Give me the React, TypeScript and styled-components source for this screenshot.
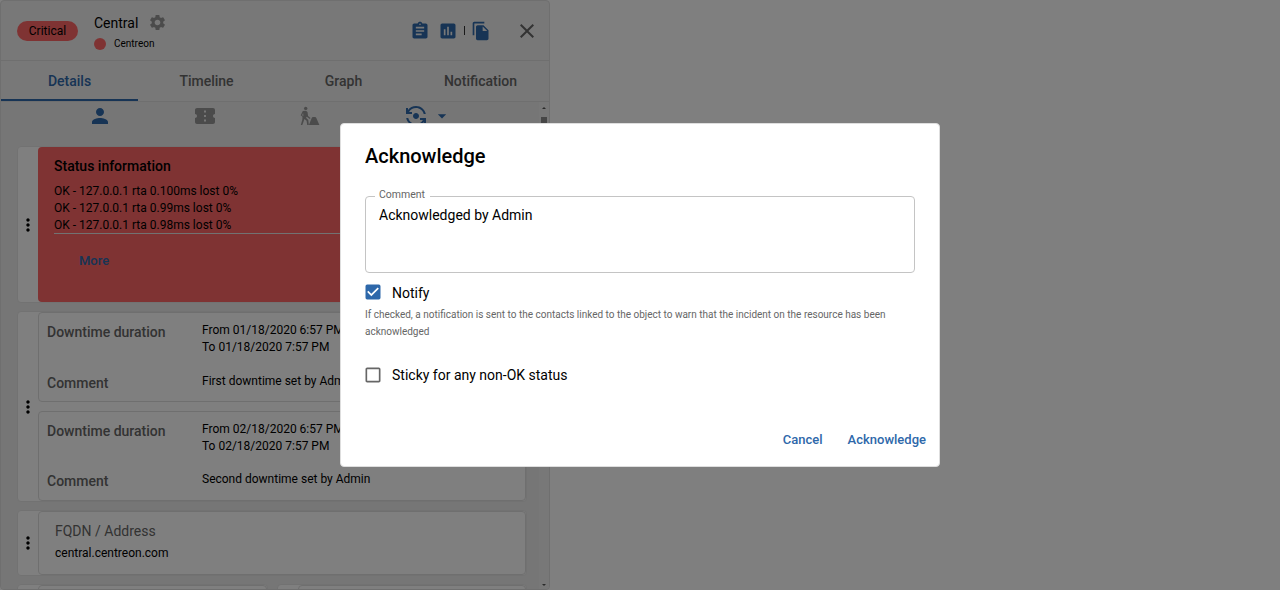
import React from 'react';
import styled, { createGlobalStyle } from 'styled-components';
import {
  MdSettings, MdAssignment, MdInsertChart, MdFileCopy, MdClose, MdPerson,
  MdConfirmationNumber, MdFlipCameraAndroid, MdArrowDropDown, MdMoreVert,
  MdCheckBox, MdCheckBoxOutlineBlank,
} from 'react-icons/md';

const GlobalStyle = createGlobalStyle`
  *, *::before, *::after { box-sizing: border-box; }
  body { margin: 0; background: #fff; overflow: hidden; font-family: Roboto, sans-serif; color: #000; }
  button, textarea { font-family: inherit; }
`;

const blue = '#2e68aa';
const red = '#ff6666';
const grey = '#666';

const Page = styled.main`
  height: 590px;
  overflow: hidden;
`;

const Panel = styled.aside`
  width: 550px;
  height: 590px;
  display: flex;
  flex-direction: column;
  border: 1px solid #dedede;
  border-radius: 4px;
  background: #f0f0f0;
  overflow: hidden;
`;

const PanelHeader = styled.header`
  flex: none;
  height: 60px;
  display: flex;
  align-items: center;
  padding: 0 10px 0 16px;
  border-bottom: 1px solid #dedede;
`;

const StatusChip = styled.span`
  width: 61px;
  height: 20px;
  border-radius: 10px;
  background: ${red};
  font-size: 12px;
  line-height: 21px;
  text-align: center;
`;

const Resource = styled.div`
  flex: 1;
  padding: 5px 0 0 16px;
`;

const ResourceName = styled.div`
  height: 21px;
  display: flex;
  align-items: center;
  gap: 10px;
  font-size: 14px;
  svg { width: 19px; height: 19px; color: #979797; margin-top: -2px; }
`;

const Parent = styled.div`
  height: 20px;
  display: flex;
  align-items: center;
  gap: 8px;
  font-size: 10px;
`;

const Dot = styled.i`
  width: 12px;
  height: 12px;
  border-radius: 50%;
  background: ${red};
`;

const HeaderActions = styled.div`
  display: flex;
  align-items: center;
  color: ${blue};
  svg { width: 20px; height: 20px; }
`;

const ActionIcon = styled.span<{ $gap?: number }>`
  display: flex;
  margin-right: ${p => p.$gap ?? 8}px;
`;

const Divider = styled.i`
  width: 1px;
  height: 9px;
  background: #333;
  margin-right: 6px;
`;

const CloseIcon = styled.span`
  display: flex;
  color: #666;
  svg { width: 24px; height: 24px; }
`;

const Tabs = styled.nav`
  flex: none;
  height: 41px;
  display: grid;
  grid-template-columns: repeat(4, 137px);
  border-bottom: 1px solid #dedede;
`;

const Tab = styled.div<{ $active?: boolean }>`
  font-size: 14px;
  font-weight: 500;
  line-height: 40px;
  text-align: center;
  color: ${p => (p.$active ? blue : grey)};
  box-shadow: ${p => (p.$active ? `inset 0 -2px ${blue}` : 'none')};
`;

const Body = styled.div`
  flex: 1;
  min-height: 0;
  display: flex;
  background: #ececec;
`;

const Content = styled.div`
  width: 538px;
  padding: 0 12px 0 16px;
  overflow: hidden;
`;

const Scrollbar = styled.div`
  width: 10px;
  display: flex;
  flex-direction: column;
  align-items: center;
  justify-content: space-between;
  background: #f0f0f0;
  padding: 5px 0 3px;
`;

const ScrollStart = styled.div`
  display: flex;
  flex-direction: column;
  align-items: center;
  gap: 8px;
`;

const Arrow = styled.i<{ $down?: boolean }>`
  border: 2px solid transparent;
  border-top-width: ${p => (p.$down ? 2 : 0)}px;
  border-bottom-width: ${p => (p.$down ? 0 : 2)}px;
  border-${p => (p.$down ? 'top' : 'bottom')}-color: #555;
`;

const Thumb = styled.i`
  width: 6px;
  height: 100px;
  background: #8c8c8c;
`;

const Toolbar = styled.div`
  height: 44px;
  display: grid;
  grid-template-columns: 30px 75px 30px 75px 30px 76px 30px 22px;
  padding: 2px 0 0 68px;
`;

const ToolIcon = styled.span<{ $active?: boolean; $size?: number }>`
  display: flex;
  justify-content: center;
  height: 24px;
  align-items: center;
  color: ${p => (p.$active ? blue : '#979797')};
  svg { width: ${p => p.$size ?? 24}px; height: ${p => p.$size ?? 24}px; flex: none; }
`;

const Card = styled.section<{ $height: number }>`
  height: ${p => p.$height}px;
  display: flex;
  border: 1px solid #e4e4e4;
  border-radius: 4px;
  background: #fff;
  margin-bottom: 8px;
`;

const Handle = styled.div`
  width: 20px;
  flex: none;
  display: flex;
  align-items: center;
  justify-content: center;
  svg { width: 20px; height: 20px; }
`;

const StatusBox = styled.div`
  flex: 1;
  border-radius: 4px;
  background: ${red};
  padding: 8px 16px;
`;

const StatusTitle = styled.h3`
  margin: 0 0 6px;
  font-size: 14px;
  font-weight: 500;
  line-height: 22px;
`;

const Lines = styled.div`
  height: 51px;
  border-bottom: 1px solid #e4e4e4;
  font-size: 12px;
  line-height: 17px;
`;

const More = styled.div`
  padding: 18px 0 0 25px;
  color: ${blue};
  font-size: 13px;
  font-weight: 500;
  line-height: 18px;
`;

const Stack = styled.div`
  flex: 1;
  display: flex;
  flex-direction: column;
  gap: 8.6px;
`;

const Downtime = styled.div`
  flex: 1;
  display: grid;
  grid-template-columns: 155px 1fr;
  grid-template-rows: 50.6px 1fr;
  padding: 9px 8px 0;
  border: 1px solid #dedede;
  border-radius: 4px;
`;

const Label = styled.div`
  font-size: 14px;
  font-weight: 500;
  line-height: 21px;
  color: ${grey};
`;

const Value = styled.div`
  font-size: 12px;
  line-height: 17px;
`;

const Fact = styled.div`
  flex: 1;
  border: 1px solid #dedede;
  border-radius: 4px;
  padding: 9px 16px;
`;

const FactTitle = styled.div`
  font-size: 14px;
  line-height: 21px;
  color: ${grey};
  margin-bottom: 3px;
`;

const HalfRow = styled.div`
  display: grid;
  grid-template-columns: 251px 250px;
  gap: 9px;
`;

const Backdrop = styled.div`
  position: fixed;
  inset: 0;
  display: flex;
  align-items: center;
  justify-content: center;
  background: rgba(0, 0, 0, 0.5);
`;

const Dialog = styled.div`
  width: 600px;
  height: 344px;
  padding: 16px 25px 0;
  display: flex;
  flex-direction: column;
  border: 1px solid #dedede;
  border-radius: 4px;
  background: #fff;
`;

const DialogTitle = styled.h2`
  margin: 0 -1px 16px;
  font-size: 20px;
  font-weight: 500;
  line-height: 32px;
`;

const Field = styled.fieldset`
  height: 85px;
  margin: 0 -1px 9px;
  padding: 0 8px 0 9px;
  border: 1px solid #c4c4c4;
  border-radius: 4px;
  min-width: 0;
`;

const Legend = styled.legend`
  height: 16px;
  padding: 0 5px 0 4px;
  font-size: 10.5px;
  line-height: 14px;
  color: ${grey};
`;

const Comment = styled.textarea`
  display: block;
  width: 100%;
  height: 56px;
  padding: 2px 4px;
  border: 0;
  outline: 0;
  resize: none;
  background: transparent;
  color: #000;
  font-size: 14px;
  line-height: 18px;
`;

const CheckRow = styled.div<{ $checked?: boolean }>`
  height: 22px;
  display: flex;
  align-items: center;
  gap: 9px;
  margin-left: -3px;
  font-size: 14px;
  svg {
    width: 20px;
    height: 20px;
    margin-bottom: ${p => (p.$checked ? 2 : 0)}px;
    color: ${p => (p.$checked ? blue : grey)};
  }
`;

const Hint = styled.p`
  margin: 2px -1px 24px;
  font-size: 10px;
  line-height: 17px;
  color: ${grey};
`;

const DialogActions = styled.div`
  display: flex;
  justify-content: flex-end;
  gap: 25px;
  margin: auto -12px 15px 0;
`;

const TextButton = styled.button`
  border: 0;
  padding: 0;
  background: none;
  color: ${blue};
  font-size: 13px;
  font-weight: 500;
  line-height: 22px;
`;

const DiggingIcon = () => (
  <svg viewBox="0 0 20 20" fill="currentColor">
    <circle cx="5.7" cy="2.4" r="1.7" />
    <path d="M2.8 4.9 6 4.7l1.5 1.2.6 4.1 2.4 2-.6.9-3.1-2.1-.8 1 2.3 2.2.5 5H7.2l-.6-4.2-2.2-1.9-.8 2.6-1.3 3.5H.8l1.5-5.3.2-2.9L.7 9.3Zm.3 2.1-1 2.2 1.3.9Z" />
    <path d="M8.9 19 11.7 11.9q.4-.9 1.3-.9h2q.9 0 1.3.9L19.4 19Z" />
  </svg>
);

const downtimes = [
  { from: 'From 01/18/2020 6:57 PM', to: 'To 01/18/2020 7:57 PM', comment: 'First downtime set by Admin' },
  { from: 'From 02/18/2020 6:57 PM', to: 'To 02/18/2020 7:57 PM', comment: 'Second downtime set by Admin' },
];

export default function App() {
  return (
    <>
      <GlobalStyle />
      <Page>
        <Panel>
          <PanelHeader>
            <StatusChip>Critical</StatusChip>
            <Resource>
              <ResourceName>Central <MdSettings /></ResourceName>
              <Parent><Dot />Centreon</Parent>
            </Resource>
            <HeaderActions>
              <ActionIcon><MdAssignment /></ActionIcon>
              <ActionIcon $gap={6}><MdInsertChart /></ActionIcon>
              <Divider />
              <ActionIcon $gap={24}><MdFileCopy /></ActionIcon>
            </HeaderActions>
            <CloseIcon><MdClose /></CloseIcon>
          </PanelHeader>
          <Tabs>
            <Tab $active>Details</Tab>
            <Tab>Timeline</Tab>
            <Tab>Graph</Tab>
            <Tab>Notification</Tab>
          </Tabs>
          <Body>
            <Content>
              <Toolbar>
                <ToolIcon $active><MdPerson /></ToolIcon><span />
                <ToolIcon><MdConfirmationNumber /></ToolIcon><span />
                <ToolIcon $size={20}><DiggingIcon /></ToolIcon><span />
                <ToolIcon $active><MdFlipCameraAndroid /></ToolIcon>
                <ToolIcon $active $size={20}><MdArrowDropDown /></ToolIcon>
              </Toolbar>
              <Card $height={157}>
                <Handle><MdMoreVert /></Handle>
                <StatusBox>
                  <StatusTitle>Status information</StatusTitle>
                  <Lines>
                    <div>OK - 127.0.0.1 rta 0.100ms lost 0%</div>
                    <div>OK - 127.0.0.1 rta 0.99ms lost 0%</div>
                    <div>OK - 127.0.0.1 rta 0.98ms lost 0%</div>
                  </Lines>
                  <More>More</More>
                </StatusBox>
              </Card>
              <Card $height={191}>
                <Handle><MdMoreVert /></Handle>
                <Stack>
                  {downtimes.map(d => (
                    <Downtime key={d.from}>
                      <Label>Downtime duration</Label>
                      <Value>{d.from}<br />{d.to}</Value>
                      <Label>Comment</Label>
                      <Value>{d.comment}</Value>
                    </Downtime>
                  ))}
                </Stack>
              </Card>
              <Card $height={66}>
                <Handle><MdMoreVert /></Handle>
                <Fact>
                  <FactTitle>FQDN / Address</FactTitle>
                  <Value>central.centreon.com</Value>
                </Fact>
              </Card>
              <HalfRow>
                <Card $height={66}><Handle /><Fact /></Card>
                <Card $height={66}><Handle /><Fact /></Card>
              </HalfRow>
            </Content>
            <Scrollbar>
              <ScrollStart><Arrow /><Thumb /></ScrollStart>
              <Arrow $down />
            </Scrollbar>
          </Body>
        </Panel>
      </Page>
      <Backdrop>
        <Dialog role="dialog">
          <DialogTitle>Acknowledge</DialogTitle>
          <Field>
            <Legend>Comment</Legend>
            <Comment defaultValue="Acknowledged by Admin" />
          </Field>
          <CheckRow $checked><MdCheckBox />Notify</CheckRow>
          <Hint>
            If checked, a notification is sent to the contacts linked to the object to warn that the incident on the resource has been acknowledged
          </Hint>
          <CheckRow><MdCheckBoxOutlineBlank />Sticky for any non-OK status</CheckRow>
          <DialogActions>
            <TextButton>Cancel</TextButton>
            <TextButton>Acknowledge</TextButton>
          </DialogActions>
        </Dialog>
      </Backdrop>
    </>
  );
}
